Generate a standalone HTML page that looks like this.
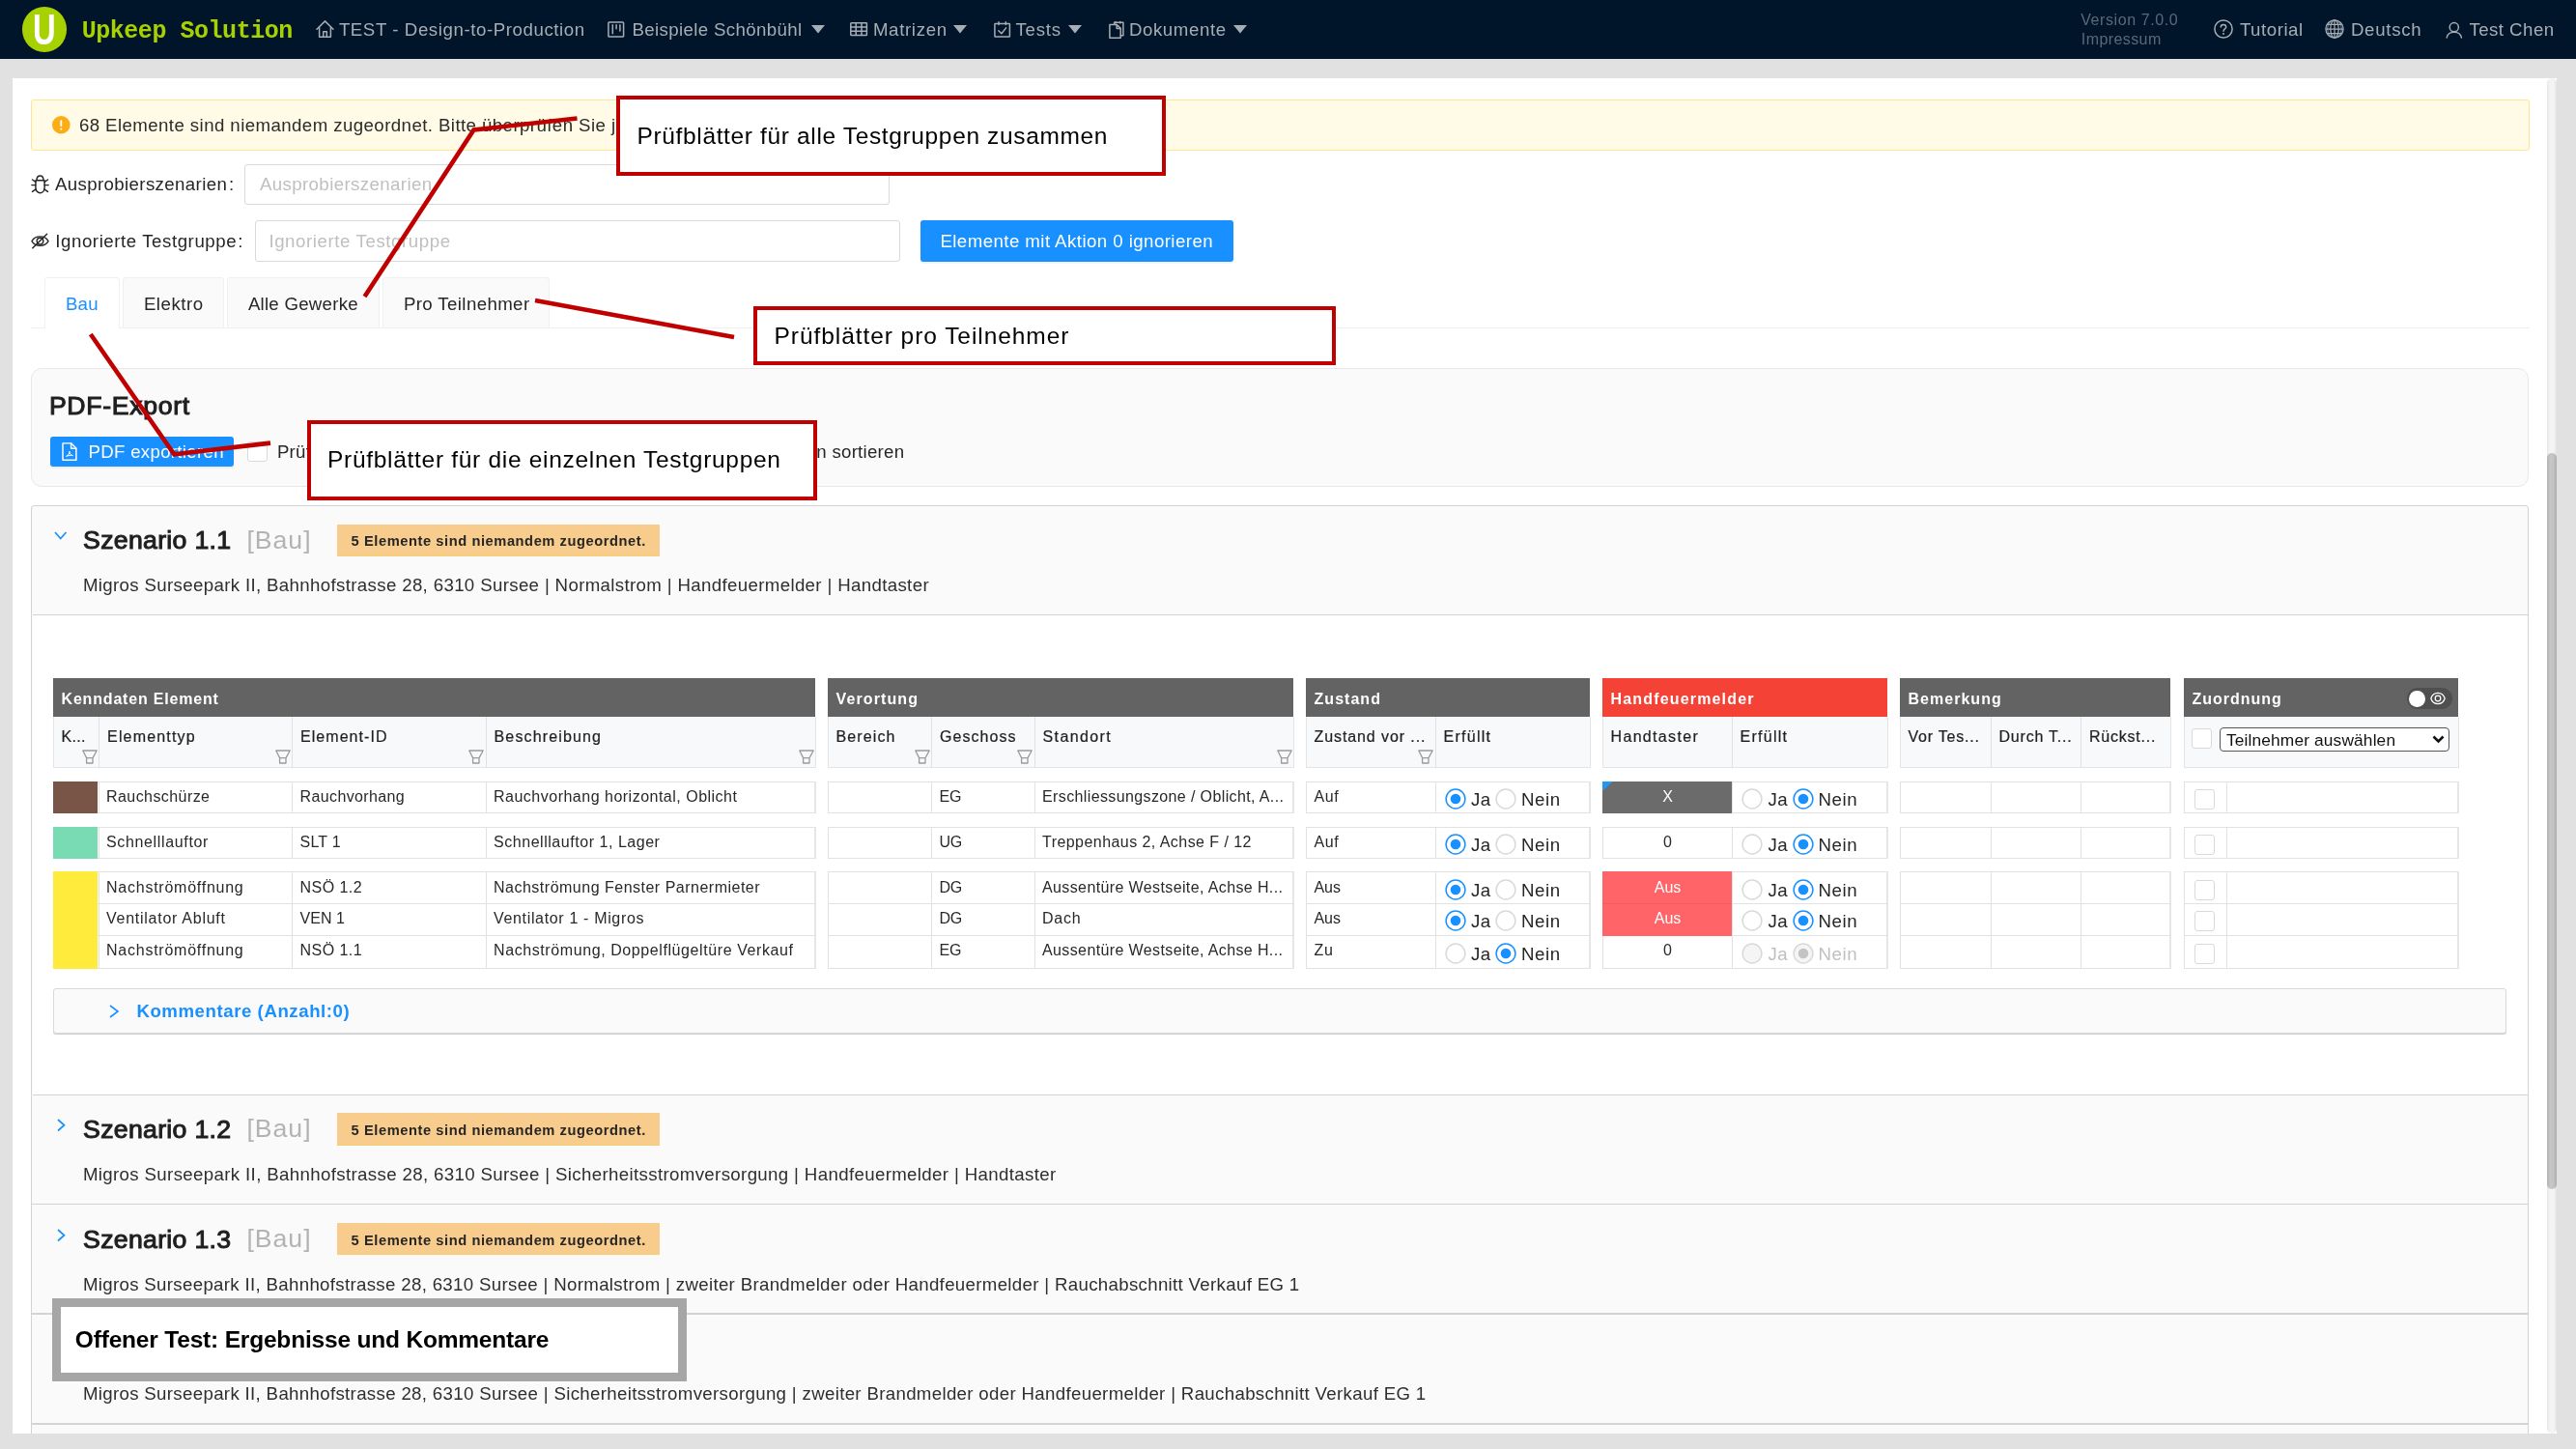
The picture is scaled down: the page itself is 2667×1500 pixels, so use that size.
<!DOCTYPE html>
<html lang="de"><head><meta charset="utf-8"><title>Upkeep Solution – Tests</title>
<style>
html,body{margin:0;padding:0}
body{width:2667px;height:1500px;position:relative;overflow:hidden;background:#e1e1e1;font-family:"Liberation Sans",sans-serif}
body div,body span,body button,body svg,body a,body h1,body h2,body label,body nav,body section,body header,body main,body aside{position:absolute;box-sizing:border-box;margin:0;padding:0}
.t{line-height:1;white-space:nowrap}
button{border:none;display:block}
h1,h2,h3{font-weight:400}
svg{overflow:visible}
</style></head>
<body>
<div id="app" style="left:0;top:0;width:2667px;height:1500px;will-change:transform">
<header id="navbar" style="left:0;top:0;width:0;height:0">
<nav style="left:0px;top:0px;width:2667px;height:61px;background:#001529"></nav>
<div style="left:22.8px;top:7.3px;width:46.6px;height:46.6px;background:#a7d100;border-radius:50%"></div>
<span id="t0" class="t" style="left:33.8px;top:9px;font-size:44px;font-weight:700;color:#fff;transform-origin:0 0;transform:scaleX(0.745);">U</span>
<span id="t1" class="t" style="left:84.7px;top:20px;font-size:25px;font-family:'Liberation Mono', monospace;font-weight:700;color:#a7d100;letter-spacing:-0.460px;">Upkeep Solution</span>
<span id="t2" class="t" style="left:350.88px;top:22px;font-size:18.67px;color:#a6adb4;letter-spacing:0.580px;">TEST - Design-to-Production</span>
<span id="t3" class="t" style="left:654.38px;top:22px;font-size:18.67px;color:#a6adb4;letter-spacing:0.370px;">Beispiele Schönbühl</span>
<span id="t4" class="t" style="left:903.88px;top:22px;font-size:18.67px;color:#a6adb4;letter-spacing:0.671px;">Matrizen</span>
<span id="t5" class="t" style="left:1051.38px;top:22px;font-size:18.67px;color:#a6adb4;letter-spacing:0.798px;">Tests</span>
<span id="t6" class="t" style="left:1168.88px;top:22px;font-size:18.67px;color:#a6adb4;letter-spacing:0.604px;">Dokumente</span>
<span id="t7" class="t" style="left:2154.24px;top:13px;font-size:16px;color:#5a697a;letter-spacing:0.584px;">Version 7.0.0</span>
<span id="t8" class="t" style="left:2154.84px;top:33px;font-size:16px;color:#5a697a;letter-spacing:0.412px;">Impressum</span>
<span id="t9" class="t" style="left:2318.88px;top:22px;font-size:18.67px;color:#a6adb4;letter-spacing:0.530px;">Tutorial</span>
<span id="t10" class="t" style="left:2433.88px;top:22px;font-size:18.67px;color:#a6adb4;letter-spacing:0.715px;">Deutsch</span>
<span id="t11" class="t" style="left:2556.38px;top:22px;font-size:18.67px;color:#a6adb4;letter-spacing:0.468px;">Test Chen</span>
<svg style="left:839.5px;top:26px;width:14px;height:9px" viewBox="0 0 14 9"><path d="M0 0H14L7 8.5Z" fill="#a6adb4"/></svg>
<svg style="left:986.5px;top:26px;width:14px;height:9px" viewBox="0 0 14 9"><path d="M0 0H14L7 8.5Z" fill="#a6adb4"/></svg>
<svg style="left:1105.5px;top:26px;width:14px;height:9px" viewBox="0 0 14 9"><path d="M0 0H14L7 8.5Z" fill="#a6adb4"/></svg>
<svg style="left:1276.7px;top:26px;width:14px;height:9px" viewBox="0 0 14 9"><path d="M0 0H14L7 8.5Z" fill="#a6adb4"/></svg>
<svg style="left:327px;top:21px;width:19px;height:18px" viewBox="0 0 19 18"><g fill="none" stroke="#a6adb4" stroke-width="1.5" stroke-linejoin="round" stroke-linecap="round"><path d="M1 9.2L9.5 0.9L18 9.2"/><path d="M3.6 7.4V17.2H15.4V7.4"/><path d="M7.7 17.2V11.8H11.3V17.2"/></g></svg>
<svg style="left:629px;top:21.5px;width:17.5px;height:17px" viewBox="0 0 17.5 17"><g fill="none" stroke="#a6adb4" stroke-width="1.5" stroke-linejoin="round" stroke-linecap="round"><rect x="0.9" y="0.9" width="15.7" height="15.2" rx="0.8"/><path d="M5.3 3.8V12.8M9.1 3.8V7.8M12.9 3.8V10"/></g></svg>
<svg style="left:880px;top:23px;width:18px;height:14.2px" viewBox="0 0 18 14.2"><g fill="none" stroke="#a6adb4" stroke-width="1.5" stroke-linejoin="round" stroke-linecap="round"><rect x="0.8" y="0.8" width="16.6" height="12.6" rx="0.5"/><path d="M0.8 4.9H17.4M0.8 9.3H17.4M6.2 0.8V13.4M12 0.8V13.4"/></g></svg>
<svg style="left:1029px;top:21.5px;width:17.5px;height:17px" viewBox="0 0 17.5 17"><g fill="none" stroke="#a6adb4" stroke-width="1.5" stroke-linejoin="round" stroke-linecap="round"><rect x="0.9" y="2.4" width="15.5" height="13.7" rx="0.6"/><path d="M5 0.8V3.6M12.3 0.8V3.6M4.8 9.8L7.9 12.8L12.6 6.9"/></g></svg>
<svg style="left:1147.5px;top:21.5px;width:16px;height:18px" viewBox="0 0 16 18"><g fill="none" stroke="#a6adb4" stroke-width="1.5" stroke-linejoin="round" stroke-linecap="round"><path d="M5.6 3.2V1.2H14.9V14.8H12.3"/><path d="M7 0.5V1.9M11.8 0.5V1.9"/><path d="M0.9 3.6H8.3L12.2 7.4V17.2H0.9Z"/><path d="M8.1 3.8V7.6H12"/></g></svg>
<svg style="left:2292.2px;top:20.2px;width:20px;height:20px" viewBox="0 0 20 20"><g fill="none" stroke="#a6adb4" stroke-width="1.5" stroke-linejoin="round" stroke-linecap="round"><circle cx="10" cy="10" r="9.1"/><path d="M7.3 7.9C7.3 4.6 12.7 4.6 12.7 7.9C12.7 9.9 10 9.9 10 12.2"/></g><circle cx="10" cy="14.9" r="1" fill="#a6adb4"/></svg>
<svg style="left:2407.3px;top:20.2px;width:20px;height:20px" viewBox="0 0 20 20"><g fill="none" stroke="#a6adb4" stroke-width="1.25"><circle cx="10" cy="10" r="9.1"/><ellipse cx="10" cy="10" rx="4.2" ry="9.1"/><path d="M10 0.9V19.1M0.9 10H19.1M2.3 5.4H17.7M2.3 14.6H17.7"/><ellipse cx="10" cy="10" rx="7.3" ry="9.1" stroke-width="0.8"/></g></svg>
<svg style="left:2531.5px;top:21.5px;width:18px;height:18px" viewBox="0 0 18 18"><g fill="none" stroke="#a6adb4" stroke-width="1.5" stroke-linejoin="round" stroke-linecap="round"><circle cx="8.8" cy="6.2" r="4.6"/><path d="M1.2 17C2.2 9.3 15.4 9.3 16.4 17"/></g></svg>
</header>
<main id="content" style="left:0;top:0;width:0;height:0">
<div class="panel" style="left:13px;top:81px;width:2634px;height:1403px;background:#fff;overflow:hidden"></div>
<div style="left:2636.5px;top:81px;width:10.5px;height:1403px;background:linear-gradient(to right,#e6e6e6,#f4f4f4 30%,#f3f3f3 75%,#e0e0e0);border-radius:5px"></div>
<div style="left:2636.8px;top:469px;width:9.8px;height:762px;background:linear-gradient(to right,#b4b4b4,#c6c6c6 35%,#c4c4c4 65%,#acacac);border-radius:5px"></div>
<section id="alert" style="left:0;top:0;width:0;height:0">
<div style="left:32px;top:102.5px;width:2586.5px;height:53.2px;background:#fffbe6;border:1.3px solid #ffe58f;border-radius:3px"></div>
<svg style="left:53.5px;top:120.2px;width:18.6px;height:18.6px" viewBox="0 0 20 20"><circle cx="10" cy="10" r="10" fill="#faad14"/><rect x="9" y="4.6" width="2" height="7.2" rx="1" fill="#fff"/><circle cx="10" cy="14.6" r="1.2" fill="#fff"/></svg>
<span id="t12" class="t" style="left:81.88px;top:121px;font-size:18.67px;color:#2b2b2b;letter-spacing:0.42px;">68 Elemente sind niemandem zugeordnet. Bitte überprüfen Sie jedes Szenario.</span>
</section>
<section id="filters" style="left:0;top:0;width:0;height:0">
<span id="t13" class="t" style="left:56.88px;top:182px;font-size:18.67px;color:#262626;letter-spacing:0.379px;">Ausprobierszenarien</span>
<span id="t14" class="t" style="left:236.88px;top:182px;font-size:18.67px;color:#262626;">:</span>
<div style="left:253px;top:169.5px;width:667.6px;height:42.2px;background:#fff;border:1.3px solid #d9d9d9;border-radius:3px"></div>
<span id="t15" class="t" style="left:268.88px;top:182px;font-size:18.67px;color:#bfbfbf;letter-spacing:0.395px;">Ausprobierszenarien</span>
<span id="t16" class="t" style="left:57.28px;top:241px;font-size:18.67px;color:#262626;letter-spacing:0.569px;">Ignorierte Testgruppe</span>
<span id="t17" class="t" style="left:246.18px;top:241px;font-size:18.67px;color:#262626;">:</span>
<div style="left:264px;top:228px;width:667.5px;height:42.5px;background:#fff;border:1.3px solid #d9d9d9;border-radius:3px"></div>
<span id="t18" class="t" style="left:278.38px;top:241px;font-size:18.67px;color:#bfbfbf;letter-spacing:0.589px;">Ignorierte Testgruppe</span>
<button class="btn" style="left:953px;top:228px;width:324px;height:42.7px;background:#1890ff;border-radius:3px;box-shadow:0 2px 0 rgba(0,0,0,0.045)"></button>
<span id="t19" class="t" style="left:973.38px;top:241px;font-size:18.67px;color:#fff;letter-spacing:0.440px;">Elemente mit Aktion 0 ignorieren</span>
<svg style="left:32px;top:180.5px;width:19px;height:20px" viewBox="0 0 19 20"><g fill="none" stroke="#262626" stroke-width="1.45" stroke-linejoin="round" stroke-linecap="round"><path d="M6 5.6C6 -0.6 13 -0.6 13 5.6"/><path d="M4.9 5.8H14.1V13.2C14.1 20.6 4.9 20.6 4.9 13.2Z"/><path d="M0.8 10.6H4.9M14.1 10.6H18.2M1.5 5L4.9 7.3M17.5 5L14.1 7.3M1.5 17.4L5.2 14.8M17.5 17.4L13.8 14.8"/></g></svg>
<svg style="left:32px;top:241px;width:19px;height:17px" viewBox="0 0 19 17"><g fill="none" stroke="#262626" stroke-width="1.45" stroke-linejoin="round" stroke-linecap="round"><path d="M1 8.6C4.4 2.3 14.6 2.3 18 8.6C14.6 14.9 4.4 14.9 1 8.6Z"/><circle cx="9.5" cy="8.6" r="3.3"/><path d="M1.8 15.8L16.6 1.2"/></g></svg>
</section>
<section id="tabs" style="left:0;top:0;width:0;height:0">
<div style="left:32px;top:339px;width:2586.5px;height:1.3px;background:#f0f0f0"></div>
<div style="left:45.6px;top:287px;width:78.4px;height:53.3px;background:#fff;border:1.3px solid #f0f0f0;border-bottom:none;border-radius:3px 3px 0 0"></div>
<div style="left:127.2px;top:287px;width:104.8px;height:52.6px;background:#fafafa;border:1.3px solid #f0f0f0;border-radius:3px 3px 0 0"></div>
<div style="left:235px;top:287px;width:157.5px;height:52.6px;background:#fafafa;border:1.3px solid #f0f0f0;border-radius:3px 3px 0 0"></div>
<div style="left:396px;top:287px;width:173px;height:52.6px;background:#fafafa;border:1.3px solid #f0f0f0;border-radius:3px 3px 0 0"></div>
<span id="t20" class="t" style="left:67.88px;top:306px;font-size:18.67px;color:#1890ff;letter-spacing:0.269px;">Bau</span>
<span id="t21" class="t" style="left:148.88px;top:306px;font-size:18.67px;color:#262626;letter-spacing:0.527px;">Elektro</span>
<span id="t22" class="t" style="left:256.88px;top:306px;font-size:18.67px;color:#262626;letter-spacing:0.253px;">Alle Gewerke</span>
<span id="t23" class="t" style="left:417.88px;top:306px;font-size:18.67px;color:#262626;letter-spacing:0.392px;">Pro Teilnehmer</span>
</section>
<section id="pdf-export" style="left:0;top:0;width:0;height:0">
<div style="left:32.3px;top:381px;width:2586.2px;height:122.7px;background:#fafafa;border:1.3px solid #e8e8e8;border-radius:11px"></div>
<h2 id="t24" class="t" style="left:50.9px;top:407px;font-size:26.67px;color:#1f1f1f;letter-spacing:0.663px;-webkit-text-stroke:1.05px #1f1f1f;">PDF-Export</h2>
<button style="left:52px;top:452px;width:190px;height:31.3px;background:#1890ff;border-radius:3px;box-shadow:0 2px 0 rgba(0,0,0,0.045)"></button>
<span id="t25" class="t" style="left:91.38px;top:459px;font-size:18.67px;color:#fff;letter-spacing:0.314px;">PDF exportieren</span>
<div style="left:255.5px;top:457px;width:21.5px;height:21.3px;background:#fff;border:1.3px solid #d9d9d9;border-radius:3px"></div>
<span id="t26" class="t" style="left:286.88px;top:459px;font-size:18.67px;color:#262626;letter-spacing:0.264px;">Prüfblätter nach Teilnehmer gruppieren und Elemente nach Etagen sortieren</span>
<svg style="left:64.3px;top:458px;width:16px;height:19.2px" viewBox="0 0 16 19.2"><g fill="none" stroke="#fff" stroke-width="1.45" stroke-linejoin="round" stroke-linecap="round"><path d="M1 0.9H9.8L14.9 6V18.3H1Z"/><path d="M9.6 1.1V6.2H14.7"/><path d="M4.9 14.2C7.2 13.4 8.3 10.8 7.9 9.2C7.5 10.9 9.5 13.3 11.4 13.6C9 13.2 6.4 13.6 4.9 14.2Z" stroke-width="1"/></g></svg>
</section>
<section id="scenarios" style="left:0;top:0;width:0;height:0">
<div style="left:32.3px;top:523px;width:2586.2px;height:967px;background:#fafafa;border:1.5px solid #d3d3d3;border-radius:3px"></div>
<div style="left:33.6px;top:635.5px;width:2583.6px;height:498.0px;background:#fff;border-top:1.7px solid #d3d3d3;border-bottom:1.7px solid #d3d3d3"></div>
<div style="left:33px;top:1245.6px;width:2585px;height:1.8px;background:#d3d3d3"></div>
<div style="left:33px;top:1359.3999999999999px;width:2585px;height:1.8px;background:#d3d3d3"></div>
<div style="left:33px;top:1473.1px;width:2585px;height:1.8px;background:#d3d3d3"></div>
<svg style="left:56px;top:550px;width:13.5px;height:9px" viewBox="0 0 13.5 9"><path d="M1 1L6.75 7.5L12.5 1" fill="none" stroke="#1890ff" stroke-width="1.7"/></svg>
<h2 id="t27" class="t" style="left:86.1px;top:546px;font-size:26.67px;color:#1f1f1f;letter-spacing:0.303px;-webkit-text-stroke:1.05px #1f1f1f;">Szenario 1.1</h2>
<span id="t28" class="t" style="left:255.4px;top:546px;font-size:26.67px;color:#b3b3b3;letter-spacing:0.988px;">[Bau]</span>
<div style="left:349px;top:542.7px;width:334px;height:33.3px;background:#f7cc8c;border-bottom:1.3px solid #f5d06f"></div>
<span id="t29" class="t" style="left:363.62px;top:553px;font-size:14.67px;font-weight:700;color:#262626;letter-spacing:0.570px;">5 Elemente sind niemandem zugeordnet.</span>
<span id="t30" class="t" style="left:85.88px;top:597px;font-size:18.67px;color:#2e2e2e;letter-spacing:0.351px;">Migros Surseepark II, Bahnhofstrasse 28, 6310 Sursee | Normalstrom | Handfeuermelder | Handtaster</span>
<svg style="left:58.5px;top:1157.7px;width:9px;height:13.5px" viewBox="0 0 9 13.5"><path d="M1 1L7.5 6.75L1 12.5" fill="none" stroke="#1890ff" stroke-width="1.7"/></svg>
<h2 id="t31" class="t" style="left:86.1px;top:1156px;font-size:26.67px;color:#1f1f1f;letter-spacing:0.303px;-webkit-text-stroke:1.05px #1f1f1f;">Szenario 1.2</h2>
<span id="t32" class="t" style="left:255.4px;top:1155px;font-size:26.67px;color:#b3b3b3;letter-spacing:0.988px;">[Bau]</span>
<div style="left:349px;top:1152.4px;width:334px;height:33.3px;background:#f7cc8c;border-bottom:1.3px solid #f5d06f"></div>
<span id="t33" class="t" style="left:363.62px;top:1163px;font-size:14.67px;font-weight:700;color:#262626;letter-spacing:0.570px;">5 Elemente sind niemandem zugeordnet.</span>
<span id="t34" class="t" style="left:85.88px;top:1207px;font-size:18.67px;color:#2e2e2e;letter-spacing:0.358px;">Migros Surseepark II, Bahnhofstrasse 28, 6310 Sursee | Sicherheitsstromversorgung | Handfeuermelder | Handtaster</span>
<svg style="left:58.5px;top:1271.5px;width:9px;height:13.5px" viewBox="0 0 9 13.5"><path d="M1 1L7.5 6.75L1 12.5" fill="none" stroke="#1890ff" stroke-width="1.7"/></svg>
<h2 id="t35" class="t" style="left:86.1px;top:1270px;font-size:26.67px;color:#1f1f1f;letter-spacing:0.303px;-webkit-text-stroke:1.05px #1f1f1f;">Szenario 1.3</h2>
<span id="t36" class="t" style="left:255.4px;top:1269px;font-size:26.67px;color:#b3b3b3;letter-spacing:0.988px;">[Bau]</span>
<div style="left:349px;top:1266.2px;width:334px;height:33.3px;background:#f7cc8c;border-bottom:1.3px solid #f5d06f"></div>
<span id="t37" class="t" style="left:363.62px;top:1277px;font-size:14.67px;font-weight:700;color:#262626;letter-spacing:0.570px;">5 Elemente sind niemandem zugeordnet.</span>
<span id="t38" class="t" style="left:85.88px;top:1321px;font-size:18.67px;color:#2e2e2e;letter-spacing:0.326px;">Migros Surseepark II, Bahnhofstrasse 28, 6310 Sursee | Normalstrom | zweiter Brandmelder oder Handfeuermelder | Rauchabschnitt Verkauf EG 1</span>
<svg style="left:58.5px;top:1385.3px;width:9px;height:13.5px" viewBox="0 0 9 13.5"><path d="M1 1L7.5 6.75L1 12.5" fill="none" stroke="#1890ff" stroke-width="1.7"/></svg>
<h2 id="t39" class="t" style="left:86.1px;top:1383px;font-size:26.67px;color:#1f1f1f;letter-spacing:0.303px;-webkit-text-stroke:1.05px #1f1f1f;">Szenario 1.4</h2>
<span id="t40" class="t" style="left:255.4px;top:1383px;font-size:26.67px;color:#b3b3b3;letter-spacing:0.988px;">[Bau]</span>
<div style="left:349px;top:1380.0px;width:334px;height:33.3px;background:#f7cc8c;border-bottom:1.3px solid #f5d06f"></div>
<span id="t41" class="t" style="left:363.62px;top:1390px;font-size:14.67px;font-weight:700;color:#262626;letter-spacing:0.570px;">5 Elemente sind niemandem zugeordnet.</span>
<span id="t42" class="t" style="left:85.88px;top:1434px;font-size:18.67px;color:#2e2e2e;letter-spacing:0.330px;">Migros Surseepark II, Bahnhofstrasse 28, 6310 Sursee | Sicherheitsstromversorgung | zweiter Brandmelder oder Handfeuermelder | Rauchabschnitt Verkauf EG 1</span>
<div id="grid" style="left:0;top:0;width:0;height:0">
<div style="left:55px;top:702px;width:789px;height:40.3px;background:#636363"></div>
<span id="t43" class="t" style="left:63.54px;top:716px;font-size:16px;font-weight:700;color:#fff;letter-spacing:0.816px;">Kenndaten Element</span>
<div style="left:55px;top:742px;width:790px;height:52.7px;background:#f8f9fa;border:1.3px solid #e2e4e8;border-top:none"></div>
<span id="t44" class="t" style="left:63.54px;top:755px;font-size:16px;color:#1f1f1f;letter-spacing:0.301px;-webkit-text-stroke:0.22px #1f1f1f;">K...</span>
<svg style="left:84.5px;top:776.4px;width:16px;height:15px" viewBox="0 0 16 15"><path d="M0.8 1H15.2L11 8.6V14H4.6V8.6Z M4.6 8.6H11" fill="none" stroke="#9b9b9b" stroke-width="1.3" stroke-linejoin="round"/></svg>
<div style="left:102px;top:742px;width:1px;height:52.7px;background:#dfe1e5"></div>
<span id="t45" class="t" style="left:111.04px;top:755px;font-size:16px;color:#1f1f1f;letter-spacing:1.180px;-webkit-text-stroke:0.22px #1f1f1f;">Elementtyp</span>
<svg style="left:284.5px;top:776.4px;width:16px;height:15px" viewBox="0 0 16 15"><path d="M0.8 1H15.2L11 8.6V14H4.6V8.6Z M4.6 8.6H11" fill="none" stroke="#9b9b9b" stroke-width="1.3" stroke-linejoin="round"/></svg>
<div style="left:302px;top:742px;width:1px;height:52.7px;background:#dfe1e5"></div>
<span id="t46" class="t" style="left:311.04px;top:755px;font-size:16px;color:#1f1f1f;letter-spacing:1.043px;-webkit-text-stroke:0.22px #1f1f1f;">Element-ID</span>
<svg style="left:485px;top:776.4px;width:16px;height:15px" viewBox="0 0 16 15"><path d="M0.8 1H15.2L11 8.6V14H4.6V8.6Z M4.6 8.6H11" fill="none" stroke="#9b9b9b" stroke-width="1.3" stroke-linejoin="round"/></svg>
<div style="left:503px;top:742px;width:1px;height:52.7px;background:#dfe1e5"></div>
<span id="t47" class="t" style="left:511.54px;top:755px;font-size:16px;color:#1f1f1f;letter-spacing:1.143px;-webkit-text-stroke:0.22px #1f1f1f;">Beschreibung</span>
<svg style="left:827px;top:776.4px;width:16px;height:15px" viewBox="0 0 16 15"><path d="M0.8 1H15.2L11 8.6V14H4.6V8.6Z M4.6 8.6H11" fill="none" stroke="#9b9b9b" stroke-width="1.3" stroke-linejoin="round"/></svg>
<div style="left:55px;top:809px;width:790px;height:33px;background:#fff;border:1.3px solid #e2e2e2;border-right:2.6px solid #e6e6e6"></div>
<div style="left:102px;top:809px;width:1px;height:33px;background:#e2e2e2"></div>
<div style="left:302px;top:809px;width:1px;height:33px;background:#e2e2e2"></div>
<div style="left:503px;top:809px;width:1px;height:33px;background:#e2e2e2"></div>
<div style="left:55px;top:855.6px;width:790px;height:33.4px;background:#fff;border:1.3px solid #e2e2e2;border-right:2.6px solid #e6e6e6"></div>
<div style="left:102px;top:855.6px;width:1px;height:33.4px;background:#e2e2e2"></div>
<div style="left:302px;top:855.6px;width:1px;height:33.4px;background:#e2e2e2"></div>
<div style="left:503px;top:855.6px;width:1px;height:33.4px;background:#e2e2e2"></div>
<div style="left:55px;top:902.2px;width:790px;height:100.6px;background:#fff;border:1.3px solid #e2e2e2;border-right:2.6px solid #e6e6e6"></div>
<div style="left:102px;top:902.2px;width:1px;height:100.6px;background:#e2e2e2"></div>
<div style="left:302px;top:902.2px;width:1px;height:100.6px;background:#e2e2e2"></div>
<div style="left:503px;top:902.2px;width:1px;height:100.6px;background:#e2e2e2"></div>
<div style="left:55px;top:935px;width:790px;height:1px;background:#e2e2e2"></div>
<div style="left:55px;top:968px;width:790px;height:1px;background:#e2e2e2"></div>
<div style="left:857px;top:702px;width:481.5px;height:40.3px;background:#636363"></div>
<span id="t48" class="t" style="left:865.54px;top:716px;font-size:16px;font-weight:700;color:#fff;letter-spacing:1.107px;">Verortung</span>
<div style="left:857px;top:742px;width:482.5px;height:52.7px;background:#f8f9fa;border:1.3px solid #e2e4e8;border-top:none"></div>
<span id="t49" class="t" style="left:865.54px;top:755px;font-size:16px;color:#1f1f1f;letter-spacing:1.112px;-webkit-text-stroke:0.22px #1f1f1f;">Bereich</span>
<svg style="left:946.5px;top:776.4px;width:16px;height:15px" viewBox="0 0 16 15"><path d="M0.8 1H15.2L11 8.6V14H4.6V8.6Z M4.6 8.6H11" fill="none" stroke="#9b9b9b" stroke-width="1.3" stroke-linejoin="round"/></svg>
<div style="left:964px;top:742px;width:1px;height:52.7px;background:#dfe1e5"></div>
<span id="t50" class="t" style="left:973.04px;top:755px;font-size:16px;color:#1f1f1f;letter-spacing:1.040px;-webkit-text-stroke:0.22px #1f1f1f;">Geschoss</span>
<svg style="left:1053px;top:776.4px;width:16px;height:15px" viewBox="0 0 16 15"><path d="M0.8 1H15.2L11 8.6V14H4.6V8.6Z M4.6 8.6H11" fill="none" stroke="#9b9b9b" stroke-width="1.3" stroke-linejoin="round"/></svg>
<div style="left:1071px;top:742px;width:1px;height:52.7px;background:#dfe1e5"></div>
<span id="t51" class="t" style="left:1079.54px;top:755px;font-size:16px;color:#1f1f1f;letter-spacing:1.384px;-webkit-text-stroke:0.22px #1f1f1f;">Standort</span>
<svg style="left:1321.5px;top:776.4px;width:16px;height:15px" viewBox="0 0 16 15"><path d="M0.8 1H15.2L11 8.6V14H4.6V8.6Z M4.6 8.6H11" fill="none" stroke="#9b9b9b" stroke-width="1.3" stroke-linejoin="round"/></svg>
<div style="left:857px;top:809px;width:482.5px;height:33px;background:#fff;border:1.3px solid #e2e2e2;border-right:2.6px solid #e6e6e6"></div>
<div style="left:964px;top:809px;width:1px;height:33px;background:#e2e2e2"></div>
<div style="left:1071px;top:809px;width:1px;height:33px;background:#e2e2e2"></div>
<div style="left:857px;top:855.6px;width:482.5px;height:33.4px;background:#fff;border:1.3px solid #e2e2e2;border-right:2.6px solid #e6e6e6"></div>
<div style="left:964px;top:855.6px;width:1px;height:33.4px;background:#e2e2e2"></div>
<div style="left:1071px;top:855.6px;width:1px;height:33.4px;background:#e2e2e2"></div>
<div style="left:857px;top:902.2px;width:482.5px;height:100.6px;background:#fff;border:1.3px solid #e2e2e2;border-right:2.6px solid #e6e6e6"></div>
<div style="left:964px;top:902.2px;width:1px;height:100.6px;background:#e2e2e2"></div>
<div style="left:1071px;top:902.2px;width:1px;height:100.6px;background:#e2e2e2"></div>
<div style="left:857px;top:935px;width:482.5px;height:1px;background:#e2e2e2"></div>
<div style="left:857px;top:968px;width:482.5px;height:1px;background:#e2e2e2"></div>
<div style="left:1352px;top:702px;width:293.5px;height:40.3px;background:#636363"></div>
<span id="t52" class="t" style="left:1360.54px;top:716px;font-size:16px;font-weight:700;color:#fff;letter-spacing:1.034px;">Zustand</span>
<div style="left:1352px;top:742px;width:294.5px;height:52.7px;background:#f8f9fa;border:1.3px solid #e2e4e8;border-top:none"></div>
<span id="t53" class="t" style="left:1360.54px;top:755px;font-size:16px;color:#1f1f1f;letter-spacing:0.904px;-webkit-text-stroke:0.22px #1f1f1f;">Zustand vor ...</span>
<svg style="left:1468px;top:776.4px;width:16px;height:15px" viewBox="0 0 16 15"><path d="M0.8 1H15.2L11 8.6V14H4.6V8.6Z M4.6 8.6H11" fill="none" stroke="#9b9b9b" stroke-width="1.3" stroke-linejoin="round"/></svg>
<div style="left:1486px;top:742px;width:1px;height:52.7px;background:#dfe1e5"></div>
<span id="t54" class="t" style="left:1494.54px;top:755px;font-size:16px;color:#1f1f1f;letter-spacing:1.252px;-webkit-text-stroke:0.22px #1f1f1f;">Erfüllt</span>
<div style="left:1352px;top:809px;width:294.5px;height:33px;background:#fff;border:1.3px solid #e2e2e2;border-right:2.6px solid #e6e6e6"></div>
<div style="left:1486px;top:809px;width:1px;height:33px;background:#e2e2e2"></div>
<div style="left:1352px;top:855.6px;width:294.5px;height:33.4px;background:#fff;border:1.3px solid #e2e2e2;border-right:2.6px solid #e6e6e6"></div>
<div style="left:1486px;top:855.6px;width:1px;height:33.4px;background:#e2e2e2"></div>
<div style="left:1352px;top:902.2px;width:294.5px;height:100.6px;background:#fff;border:1.3px solid #e2e2e2;border-right:2.6px solid #e6e6e6"></div>
<div style="left:1486px;top:902.2px;width:1px;height:100.6px;background:#e2e2e2"></div>
<div style="left:1352px;top:935px;width:294.5px;height:1px;background:#e2e2e2"></div>
<div style="left:1352px;top:968px;width:294.5px;height:1px;background:#e2e2e2"></div>
<div style="left:1659px;top:702px;width:294.5px;height:40.3px;background:#f44336"></div>
<span id="t55" class="t" style="left:1667.54px;top:716px;font-size:16px;font-weight:700;color:#fff;letter-spacing:1.166px;">Handfeuermelder</span>
<div style="left:1659px;top:742px;width:295.5px;height:52.7px;background:#f8f9fa;border:1.3px solid #e2e4e8;border-top:none"></div>
<span id="t56" class="t" style="left:1667.54px;top:755px;font-size:16px;color:#1f1f1f;letter-spacing:1.323px;-webkit-text-stroke:0.22px #1f1f1f;">Handtaster</span>
<div style="left:1793px;top:742px;width:1px;height:52.7px;background:#dfe1e5"></div>
<span id="t57" class="t" style="left:1801.54px;top:755px;font-size:16px;color:#1f1f1f;letter-spacing:1.252px;-webkit-text-stroke:0.22px #1f1f1f;">Erfüllt</span>
<div style="left:1659px;top:809px;width:295.5px;height:33px;background:#fff;border:1.3px solid #e2e2e2;border-right:2.6px solid #e6e6e6"></div>
<div style="left:1793px;top:809px;width:1px;height:33px;background:#e2e2e2"></div>
<div style="left:1659px;top:855.6px;width:295.5px;height:33.4px;background:#fff;border:1.3px solid #e2e2e2;border-right:2.6px solid #e6e6e6"></div>
<div style="left:1793px;top:855.6px;width:1px;height:33.4px;background:#e2e2e2"></div>
<div style="left:1659px;top:902.2px;width:295.5px;height:100.6px;background:#fff;border:1.3px solid #e2e2e2;border-right:2.6px solid #e6e6e6"></div>
<div style="left:1793px;top:902.2px;width:1px;height:100.6px;background:#e2e2e2"></div>
<div style="left:1659px;top:935px;width:295.5px;height:1px;background:#e2e2e2"></div>
<div style="left:1659px;top:968px;width:295.5px;height:1px;background:#e2e2e2"></div>
<div style="left:1967px;top:702px;width:280px;height:40.3px;background:#636363"></div>
<span id="t58" class="t" style="left:1975.54px;top:716px;font-size:16px;font-weight:700;color:#fff;letter-spacing:1.017px;">Bemerkung</span>
<div style="left:1967px;top:742px;width:281px;height:52.7px;background:#f8f9fa;border:1.3px solid #e2e4e8;border-top:none"></div>
<span id="t59" class="t" style="left:1975.54px;top:755px;font-size:16px;color:#1f1f1f;letter-spacing:0.779px;-webkit-text-stroke:0.22px #1f1f1f;">Vor Tes...</span>
<div style="left:2061px;top:742px;width:1px;height:52.7px;background:#dfe1e5"></div>
<span id="t60" class="t" style="left:2069.54px;top:755px;font-size:16px;color:#1f1f1f;letter-spacing:0.778px;-webkit-text-stroke:0.22px #1f1f1f;">Durch T...</span>
<div style="left:2154px;top:742px;width:1px;height:52.7px;background:#dfe1e5"></div>
<span id="t61" class="t" style="left:2163.04px;top:755px;font-size:16px;color:#1f1f1f;letter-spacing:0.773px;-webkit-text-stroke:0.22px #1f1f1f;">Rückst...</span>
<div style="left:1967px;top:809px;width:281px;height:33px;background:#fff;border:1.3px solid #e2e2e2;border-right:2.6px solid #e6e6e6"></div>
<div style="left:2061px;top:809px;width:1px;height:33px;background:#e2e2e2"></div>
<div style="left:2154px;top:809px;width:1px;height:33px;background:#e2e2e2"></div>
<div style="left:1967px;top:855.6px;width:281px;height:33.4px;background:#fff;border:1.3px solid #e2e2e2;border-right:2.6px solid #e6e6e6"></div>
<div style="left:2061px;top:855.6px;width:1px;height:33.4px;background:#e2e2e2"></div>
<div style="left:2154px;top:855.6px;width:1px;height:33.4px;background:#e2e2e2"></div>
<div style="left:1967px;top:902.2px;width:281px;height:100.6px;background:#fff;border:1.3px solid #e2e2e2;border-right:2.6px solid #e6e6e6"></div>
<div style="left:2061px;top:902.2px;width:1px;height:100.6px;background:#e2e2e2"></div>
<div style="left:2154px;top:902.2px;width:1px;height:100.6px;background:#e2e2e2"></div>
<div style="left:1967px;top:935px;width:281px;height:1px;background:#e2e2e2"></div>
<div style="left:1967px;top:968px;width:281px;height:1px;background:#e2e2e2"></div>
<div style="left:2261px;top:702px;width:284px;height:40.3px;background:#636363"></div>
<span id="t62" class="t" style="left:2269.54px;top:716px;font-size:16px;font-weight:700;color:#fff;letter-spacing:0.969px;">Zuordnung</span>
<div style="left:2261px;top:742px;width:285px;height:52.7px;background:#f8f9fa;border:1.3px solid #e2e4e8;border-top:none"></div>
<div style="left:2261px;top:809px;width:285px;height:33px;background:#fff;border:1.3px solid #e2e2e2;border-right:2.6px solid #e6e6e6"></div>
<div style="left:2305px;top:809px;width:1px;height:33px;background:#e2e2e2"></div>
<div style="left:2261px;top:855.6px;width:285px;height:33.4px;background:#fff;border:1.3px solid #e2e2e2;border-right:2.6px solid #e6e6e6"></div>
<div style="left:2305px;top:855.6px;width:1px;height:33.4px;background:#e2e2e2"></div>
<div style="left:2261px;top:902.2px;width:285px;height:100.6px;background:#fff;border:1.3px solid #e2e2e2;border-right:2.6px solid #e6e6e6"></div>
<div style="left:2305px;top:902.2px;width:1px;height:100.6px;background:#e2e2e2"></div>
<div style="left:2261px;top:935px;width:285px;height:1px;background:#e2e2e2"></div>
<div style="left:2261px;top:968px;width:285px;height:1px;background:#e2e2e2"></div>
<div style="left:55px;top:809px;width:46.2px;height:33px;background:#795548"></div>
<div style="left:55px;top:855.6px;width:46.2px;height:33.4px;background:#78dbb3"></div>
<div style="left:55px;top:902.2px;width:46.2px;height:100.6px;background:#ffeb3b"></div>
<span id="t63" class="t" style="left:110.04px;top:817px;font-size:16px;color:#282828;letter-spacing:0.422px;">Rauchschürze</span>
<span id="t64" class="t" style="left:310.54px;top:817px;font-size:16px;color:#282828;letter-spacing:0.377px;">Rauchvorhang</span>
<span id="t65" class="t" style="left:511.04px;top:817px;font-size:16px;color:#282828;letter-spacing:0.495px;">Rauchvorhang horizontal, Oblicht</span>
<span id="t66" class="t" style="left:972.54px;top:817px;font-size:16px;color:#282828;letter-spacing:-0.300px;">EG</span>
<span id="t67" class="t" style="left:1079.04px;top:817px;font-size:16px;color:#282828;letter-spacing:0.378px;">Erschliessungszone / Oblicht, A...</span>
<span id="t68" class="t" style="left:1360.54px;top:817px;font-size:16px;color:#282828;letter-spacing:0.600px;">Auf</span>
<span id="t69" class="t" style="left:110.04px;top:864px;font-size:16px;color:#282828;letter-spacing:0.644px;">Schnelllauftor</span>
<span id="t70" class="t" style="left:310.54px;top:864px;font-size:16px;color:#282828;letter-spacing:0.225px;">SLT 1</span>
<span id="t71" class="t" style="left:511.04px;top:864px;font-size:16px;color:#282828;letter-spacing:0.537px;">Schnelllauftor 1, Lager</span>
<span id="t72" class="t" style="left:972.54px;top:864px;font-size:16px;color:#282828;letter-spacing:-0.300px;">UG</span>
<span id="t73" class="t" style="left:1079.04px;top:864px;font-size:16px;color:#282828;letter-spacing:0.444px;">Treppenhaus 2, Achse F / 12</span>
<span id="t74" class="t" style="left:1360.54px;top:864px;font-size:16px;color:#282828;letter-spacing:0.600px;">Auf</span>
<span id="t75" class="t" style="left:110.04px;top:911px;font-size:16px;color:#282828;letter-spacing:0.751px;">Nachströmöffnung</span>
<span id="t76" class="t" style="left:310.54px;top:911px;font-size:16px;color:#282828;letter-spacing:0.443px;">NSÖ 1.2</span>
<span id="t77" class="t" style="left:511.04px;top:911px;font-size:16px;color:#282828;letter-spacing:0.496px;">Nachströmung Fenster Parnermieter</span>
<span id="t78" class="t" style="left:972.54px;top:911px;font-size:16px;color:#282828;letter-spacing:-0.300px;">DG</span>
<span id="t79" class="t" style="left:1079.04px;top:911px;font-size:16px;color:#282828;letter-spacing:0.379px;">Aussentüre Westseite, Achse H...</span>
<span id="t80" class="t" style="left:1360.54px;top:911px;font-size:16px;color:#282828;letter-spacing:-0.079px;">Aus</span>
<span id="t81" class="t" style="left:110.04px;top:943px;font-size:16px;color:#282828;letter-spacing:0.733px;">Ventilator Abluft</span>
<span id="t82" class="t" style="left:310.54px;top:943px;font-size:16px;color:#282828;letter-spacing:0.017px;">VEN 1</span>
<span id="t83" class="t" style="left:511.04px;top:943px;font-size:16px;color:#282828;letter-spacing:0.657px;">Ventilator 1 - Migros</span>
<span id="t84" class="t" style="left:972.54px;top:943px;font-size:16px;color:#282828;letter-spacing:-0.300px;">DG</span>
<span id="t85" class="t" style="left:1079.04px;top:943px;font-size:16px;color:#282828;letter-spacing:0.720px;">Dach</span>
<span id="t86" class="t" style="left:1360.54px;top:943px;font-size:16px;color:#282828;letter-spacing:-0.079px;">Aus</span>
<span id="t87" class="t" style="left:110.04px;top:976px;font-size:16px;color:#282828;letter-spacing:0.751px;">Nachströmöffnung</span>
<span id="t88" class="t" style="left:310.54px;top:976px;font-size:16px;color:#282828;letter-spacing:0.443px;">NSÖ 1.1</span>
<span id="t89" class="t" style="left:511.04px;top:976px;font-size:16px;color:#282828;letter-spacing:0.588px;">Nachströmung, Doppelflügeltüre Verkauf</span>
<span id="t90" class="t" style="left:972.54px;top:976px;font-size:16px;color:#282828;letter-spacing:-0.300px;">EG</span>
<span id="t91" class="t" style="left:1079.04px;top:976px;font-size:16px;color:#282828;letter-spacing:0.379px;">Aussentüre Westseite, Achse H...</span>
<span id="t92" class="t" style="left:1360.54px;top:976px;font-size:16px;color:#282828;letter-spacing:0.600px;">Zu</span>
<div style="left:1659px;top:809px;width:134px;height:33px;background:#6b6b6b"></div>
<svg style="left:1659px;top:809px;width:11px;height:10px" viewBox="0 0 11 10"><path d="M0 0H11L0 10Z" fill="#2196f3"/></svg>
<span id="t93" class="t" style="left:1426.5px;width:600px;text-align:center;top:817px;font-size:16px;color:#fff;">X</span>
<span id="t94" class="t" style="left:1426.5px;width:600px;text-align:center;top:864px;font-size:16px;color:#282828;">0</span>
<div style="left:1659px;top:902.2px;width:134px;height:66.4px;background:#ff6469"></div>
<div style="left:1659px;top:935.2px;width:134px;height:1.2px;background:#f25d62"></div>
<span id="t95" class="t" style="left:1426.5px;width:600px;text-align:center;top:911px;font-size:16px;color:#fff;">Aus</span>
<span id="t96" class="t" style="left:1426.5px;width:600px;text-align:center;top:943px;font-size:16px;color:#fff;">Aus</span>
<span id="t97" class="t" style="left:1426.5px;width:600px;text-align:center;top:976px;font-size:16px;color:#282828;">0</span>
<svg style="left:1495.5px;top:816.4px;width:22px;height:22px" viewBox="0 0 22 22"><circle cx="11" cy="11" r="9.9" fill="#fff" stroke="#1890ff" stroke-width="1.5"/><circle cx="11" cy="11" r="5.3" fill="#1890ff"/></svg>
<svg style="left:1548px;top:816.4px;width:22px;height:22px" viewBox="0 0 22 22"><circle cx="11" cy="11" r="9.9" fill="#fff" stroke="#d9d9d9" stroke-width="1.5"/></svg>
<span id="t98" class="t" style="left:1522.88px;top:819px;font-size:18.67px;color:#262626;letter-spacing:0.522px;">Ja</span>
<span id="t99" class="t" style="left:1574.88px;top:819px;font-size:18.67px;color:#262626;letter-spacing:0.622px;">Nein</span>
<svg style="left:1495.5px;top:863.2px;width:22px;height:22px" viewBox="0 0 22 22"><circle cx="11" cy="11" r="9.9" fill="#fff" stroke="#1890ff" stroke-width="1.5"/><circle cx="11" cy="11" r="5.3" fill="#1890ff"/></svg>
<svg style="left:1548px;top:863.2px;width:22px;height:22px" viewBox="0 0 22 22"><circle cx="11" cy="11" r="9.9" fill="#fff" stroke="#d9d9d9" stroke-width="1.5"/></svg>
<span id="t100" class="t" style="left:1522.88px;top:866px;font-size:18.67px;color:#262626;letter-spacing:0.522px;">Ja</span>
<span id="t101" class="t" style="left:1574.88px;top:866px;font-size:18.67px;color:#262626;letter-spacing:0.622px;">Nein</span>
<svg style="left:1495.5px;top:910.2px;width:22px;height:22px" viewBox="0 0 22 22"><circle cx="11" cy="11" r="9.9" fill="#fff" stroke="#1890ff" stroke-width="1.5"/><circle cx="11" cy="11" r="5.3" fill="#1890ff"/></svg>
<svg style="left:1548px;top:910.2px;width:22px;height:22px" viewBox="0 0 22 22"><circle cx="11" cy="11" r="9.9" fill="#fff" stroke="#d9d9d9" stroke-width="1.5"/></svg>
<span id="t102" class="t" style="left:1522.88px;top:913px;font-size:18.67px;color:#262626;letter-spacing:0.522px;">Ja</span>
<span id="t103" class="t" style="left:1574.88px;top:913px;font-size:18.67px;color:#262626;letter-spacing:0.622px;">Nein</span>
<svg style="left:1495.5px;top:942.3px;width:22px;height:22px" viewBox="0 0 22 22"><circle cx="11" cy="11" r="9.9" fill="#fff" stroke="#1890ff" stroke-width="1.5"/><circle cx="11" cy="11" r="5.3" fill="#1890ff"/></svg>
<svg style="left:1548px;top:942.3px;width:22px;height:22px" viewBox="0 0 22 22"><circle cx="11" cy="11" r="9.9" fill="#fff" stroke="#d9d9d9" stroke-width="1.5"/></svg>
<span id="t104" class="t" style="left:1522.88px;top:945px;font-size:18.67px;color:#262626;letter-spacing:0.522px;">Ja</span>
<span id="t105" class="t" style="left:1574.88px;top:945px;font-size:18.67px;color:#262626;letter-spacing:0.622px;">Nein</span>
<svg style="left:1495.5px;top:976.3px;width:22px;height:22px" viewBox="0 0 22 22"><circle cx="11" cy="11" r="9.9" fill="#fff" stroke="#d9d9d9" stroke-width="1.5"/></svg>
<svg style="left:1548px;top:976.3px;width:22px;height:22px" viewBox="0 0 22 22"><circle cx="11" cy="11" r="9.9" fill="#fff" stroke="#1890ff" stroke-width="1.5"/><circle cx="11" cy="11" r="5.3" fill="#1890ff"/></svg>
<span id="t106" class="t" style="left:1522.88px;top:979px;font-size:18.67px;color:#262626;letter-spacing:0.522px;">Ja</span>
<span id="t107" class="t" style="left:1574.88px;top:979px;font-size:18.67px;color:#262626;letter-spacing:0.622px;">Nein</span>
<svg style="left:1803px;top:816.4px;width:22px;height:22px" viewBox="0 0 22 22"><circle cx="11" cy="11" r="9.9" fill="#fff" stroke="#d9d9d9" stroke-width="1.5"/></svg>
<svg style="left:1855.5px;top:816.4px;width:22px;height:22px" viewBox="0 0 22 22"><circle cx="11" cy="11" r="9.9" fill="#fff" stroke="#1890ff" stroke-width="1.5"/><circle cx="11" cy="11" r="5.3" fill="#1890ff"/></svg>
<span id="t108" class="t" style="left:1830.38px;top:819px;font-size:18.67px;color:#262626;letter-spacing:0.522px;">Ja</span>
<span id="t109" class="t" style="left:1882.38px;top:819px;font-size:18.67px;color:#262626;letter-spacing:0.622px;">Nein</span>
<svg style="left:1803px;top:863.2px;width:22px;height:22px" viewBox="0 0 22 22"><circle cx="11" cy="11" r="9.9" fill="#fff" stroke="#d9d9d9" stroke-width="1.5"/></svg>
<svg style="left:1855.5px;top:863.2px;width:22px;height:22px" viewBox="0 0 22 22"><circle cx="11" cy="11" r="9.9" fill="#fff" stroke="#1890ff" stroke-width="1.5"/><circle cx="11" cy="11" r="5.3" fill="#1890ff"/></svg>
<span id="t110" class="t" style="left:1830.38px;top:866px;font-size:18.67px;color:#262626;letter-spacing:0.522px;">Ja</span>
<span id="t111" class="t" style="left:1882.38px;top:866px;font-size:18.67px;color:#262626;letter-spacing:0.622px;">Nein</span>
<svg style="left:1803px;top:910.2px;width:22px;height:22px" viewBox="0 0 22 22"><circle cx="11" cy="11" r="9.9" fill="#fff" stroke="#d9d9d9" stroke-width="1.5"/></svg>
<svg style="left:1855.5px;top:910.2px;width:22px;height:22px" viewBox="0 0 22 22"><circle cx="11" cy="11" r="9.9" fill="#fff" stroke="#1890ff" stroke-width="1.5"/><circle cx="11" cy="11" r="5.3" fill="#1890ff"/></svg>
<span id="t112" class="t" style="left:1830.38px;top:913px;font-size:18.67px;color:#262626;letter-spacing:0.522px;">Ja</span>
<span id="t113" class="t" style="left:1882.38px;top:913px;font-size:18.67px;color:#262626;letter-spacing:0.622px;">Nein</span>
<svg style="left:1803px;top:942.3px;width:22px;height:22px" viewBox="0 0 22 22"><circle cx="11" cy="11" r="9.9" fill="#fff" stroke="#d9d9d9" stroke-width="1.5"/></svg>
<svg style="left:1855.5px;top:942.3px;width:22px;height:22px" viewBox="0 0 22 22"><circle cx="11" cy="11" r="9.9" fill="#fff" stroke="#1890ff" stroke-width="1.5"/><circle cx="11" cy="11" r="5.3" fill="#1890ff"/></svg>
<span id="t114" class="t" style="left:1830.38px;top:945px;font-size:18.67px;color:#262626;letter-spacing:0.522px;">Ja</span>
<span id="t115" class="t" style="left:1882.38px;top:945px;font-size:18.67px;color:#262626;letter-spacing:0.622px;">Nein</span>
<svg style="left:1803px;top:976.3px;width:22px;height:22px" viewBox="0 0 22 22"><circle cx="11" cy="11" r="9.9" fill="#f5f5f5" stroke="#d9d9d9" stroke-width="1.5"/></svg>
<svg style="left:1855.5px;top:976.3px;width:22px;height:22px" viewBox="0 0 22 22"><circle cx="11" cy="11" r="9.9" fill="#f5f5f5" stroke="#d9d9d9" stroke-width="1.5"/><circle cx="11" cy="11" r="5.3" fill="#c4c4c4"/></svg>
<span id="t116" class="t" style="left:1830.38px;top:979px;font-size:18.67px;color:#c0c0c0;letter-spacing:0.522px;">Ja</span>
<span id="t117" class="t" style="left:1882.38px;top:979px;font-size:18.67px;color:#c0c0c0;letter-spacing:0.622px;">Nein</span>
<div style="left:2269px;top:754px;width:21px;height:21px;background:#fff;border:1.3px solid #d9d9d9;border-radius:3px"></div>
<div style="left:2298px;top:752.6px;width:237.5px;height:25.0px;background:#fff;border:1.3px solid #555;border-radius:4px"></div>
<span id="t118" class="t" style="left:2304.96px;top:758px;font-size:17.33px;color:#111;letter-spacing:0.140px;">Teilnehmer auswählen</span>
<svg style="left:2518px;top:761px;width:13px;height:9px" viewBox="0 0 13 9"><path d="M1.5 1.5L6.5 6.5L11.5 1.5" fill="none" stroke="#111" stroke-width="2.6"/></svg>
<div style="left:2272px;top:816.9px;width:21px;height:21.3px;background:#fff;border:1.3px solid #d9d9d9;border-radius:3px"></div>
<div style="left:2272px;top:863.7px;width:21px;height:21.3px;background:#fff;border:1.3px solid #d9d9d9;border-radius:3px"></div>
<div style="left:2272px;top:910.7px;width:21px;height:21.3px;background:#fff;border:1.3px solid #d9d9d9;border-radius:3px"></div>
<div style="left:2272px;top:942.8px;width:21px;height:21.3px;background:#fff;border:1.3px solid #d9d9d9;border-radius:3px"></div>
<div style="left:2272px;top:976.8px;width:21px;height:21.3px;background:#fff;border:1.3px solid #d9d9d9;border-radius:3px"></div>
<div style="left:2492px;top:712.4px;width:47px;height:21.6px;background:#4f4f4f;border-radius:11px"></div>
<div style="left:2494.4px;top:714.6px;width:16.6px;height:17.2px;background:#fff;border-radius:50%"></div>
<svg style="left:2516.2px;top:716.3px;width:16px;height:14px" viewBox="0 0 16 14"><path d="M0.8 7C3.2 -0.5 12.8 -0.5 15.2 7C12.8 14.5 3.2 14.5 0.8 7Z" fill="none" stroke="#fff" stroke-width="1.25"/><circle cx="8" cy="7" r="2.8" fill="none" stroke="#fff" stroke-width="1.25"/></svg>
<div style="left:55px;top:1023px;width:2540.4px;height:47.4px;background:#fafafa;border:1.3px solid #d9d9d9;border-radius:3px;box-shadow:0 1px 0 #d0d0d0"></div>
<svg style="left:112.5px;top:1039.5px;width:10.5px;height:14px" viewBox="0 0 10.5 14"><path d="M1 1L9 7L1 13" fill="none" stroke="#1890ff" stroke-width="1.6"/></svg>
<span id="t119" class="t" style="left:141.38px;top:1038px;font-size:18.67px;font-weight:700;color:#1890ff;letter-spacing:0.547px;">Kommentare (Anzahl:0)</span>
</div>
</section>
<div style="left:0px;top:1484px;width:2667px;height:16px;background:#e1e1e1"></div>
</main>
<aside id="annotations" style="left:0;top:0;width:0;height:0">
<svg style="left:0;top:0;width:2667px;height:1500px" viewBox="0 0 2667 1500"><g fill="none" stroke="#c00000" stroke-width="4.6" stroke-linejoin="miter"><path d="M377.5 307L490.5 134.5L597.5 122.5"/><path d="M554 311L760 349"/><path d="M93.8 346L180.3 470.3L280 458.6"/></g></svg>
<div style="left:638px;top:99px;width:569px;height:83px;background:#fff;border:4px solid #c00000"></div>
<span id="t120" class="t" style="left:659.53px;top:129px;font-size:24.5px;color:#000;letter-spacing:0.643px;">Prüfblätter für alle Testgruppen zusammen</span>
<div style="left:780px;top:317px;width:603px;height:61px;background:#fff;border:4px solid #c00000"></div>
<span id="t121" class="t" style="left:801.53px;top:336px;font-size:24.5px;color:#000;letter-spacing:0.939px;">Prüfblätter pro Teilnehmer</span>
<div style="left:318px;top:435px;width:528px;height:83px;background:#fff;border:4px solid #c00000"></div>
<span id="t122" class="t" style="left:339.03px;top:464px;font-size:24.5px;color:#000;letter-spacing:0.702px;">Prüfblätter für die einzelnen Testgruppen</span>
<div style="left:54px;top:1344px;width:657px;height:86px;background:#fff;border:9px solid #a6a6a6"></div>
<span id="t123" class="t" style="left:77.83px;top:1375px;font-size:24.5px;font-weight:700;color:#000;letter-spacing:-0.189px;">Offener Test: Ergebnisse und Kommentare</span>
</aside>
</div>
</body></html>
